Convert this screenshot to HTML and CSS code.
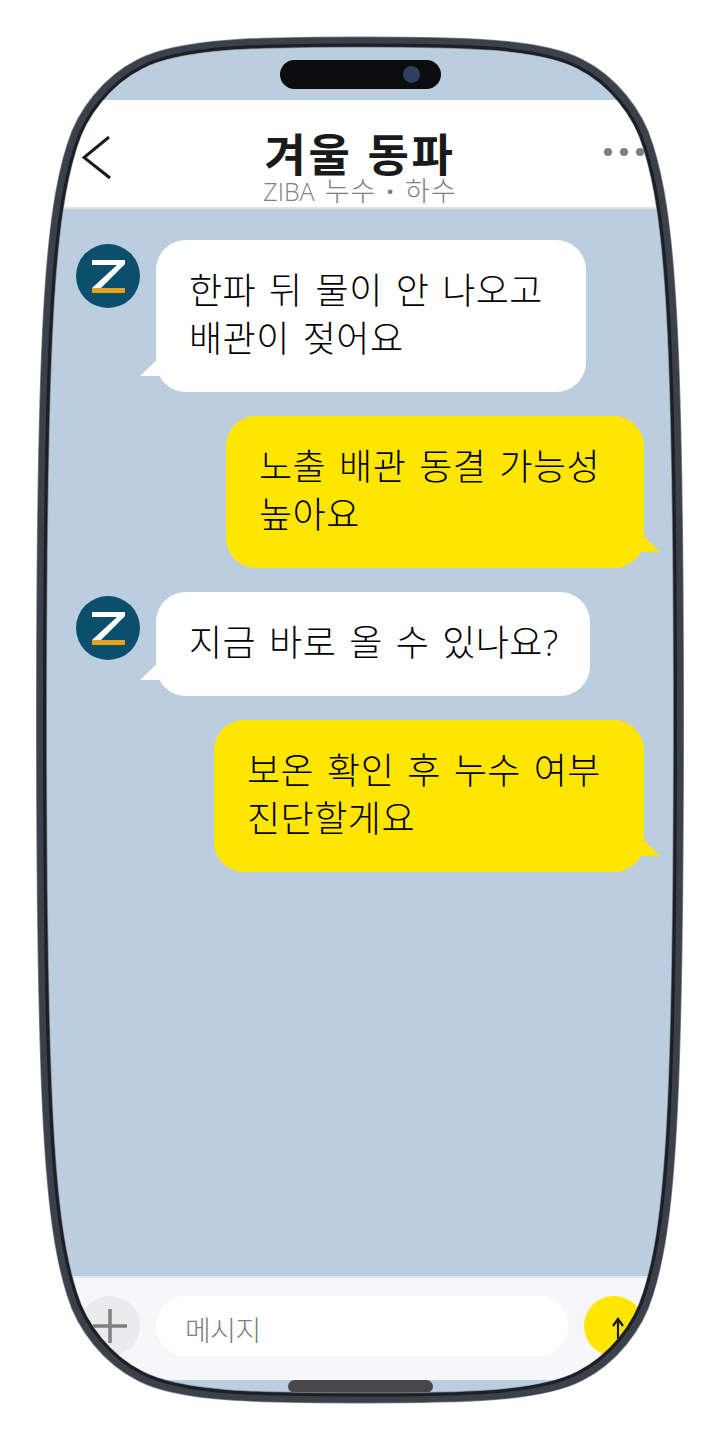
FILE: index.html

```html
<!DOCTYPE html>
<html lang="ko">
<head>
  <meta charset="UTF-8" />
  <title>겨울 동파</title>
  <link rel="stylesheet" href="styles.css">
</head>
<body>
  <div class="phone">
    <div class="screen">
      <div class="status">
        <div class="island"><span class="camera"></span></div>
      </div>

      <header class="header">
        <svg class="back" viewBox="0 0 30 44" width="30" height="44">
          <path d="M27 1 L2 21.500 L28 42" fill="none" stroke="#1a1a1a" stroke-width="3" />
        </svg>
        <div class="title-block">
          <h1 class="title">겨울 동파</h1>
          <p class="subtitle"><span class="latin">ZIBA</span> 누수 <b class="sep">·</b> 하수</p>
        </div>
        <div class="dots"><span></span><span></span><span></span></div>
      </header>

      <main class="chat">
        <div class="row row-in">
          <svg class="avatar" viewBox="0 0 64 64" width="64" height="64">
            <circle cx="32" cy="32" r="32" fill="#0b4f6c" />
            <path d="M16 16 H49 V20 L25 44 H16 L41 21 H16 Z" fill="#fff" />
            <rect x="16" y="44" width="33" height="5" fill="#e5a117" />
          </svg>
          <div class="bubble bubble-in bubble-wide">한파 뒤 물이 안 나오고<br>배관이 젖어요</div>
        </div>
        <div class="row row-out">
          <div class="bubble bubble-out bubble-narrow">노출 배관 동결 가능성<br>높아요</div>
        </div>
        <div class="row row-in">
          <svg class="avatar" viewBox="0 0 64 64" width="64" height="64">
            <circle cx="32" cy="32" r="32" fill="#0b4f6c" />
            <path d="M16 16 H49 V20 L25 44 H16 L41 21 H16 Z" fill="#fff" />
            <rect x="16" y="44" width="33" height="5" fill="#e5a117" />
          </svg>
          <div class="bubble bubble-in bubble-short">지금 바로 올 수 있나요?</div>
        </div>
        <div class="row row-out">
          <div class="bubble bubble-out bubble-wide">보온 확인 후 누수 여부<br>진단할게요</div>
        </div>
      </main>

      <div class="composer">
        <div class="plus">
          <svg viewBox="0 0 36 36" width="36" height="36">
            <path d="M18 1 V35 M1 18 H35" fill="none" stroke="#808080" stroke-width="3.500" />
          </svg>
        </div>
        <div class="input">메시지</div>
        <div class="send">
          <svg viewBox="0 0 16 40" width="16" height="40">
            <path d="M8 4 V24 M3 11 L8 4 L13 11" fill="none" stroke="#1a1a1a" stroke-width="2.200" />
          </svg>
        </div>
      </div>

      <div class="home-area"><div class="home-bar"></div></div>
    </div>

    <svg class="frame" viewBox="0 0 720 1440" width="720" height="1440">
      <path class="frame-edge" d="M360 42 C260 42 180 43 140 64 C108 80 82 112 72 146 C50 215 41.500 330 41.500 720 C41.500 1110 50 1225 72 1294 C82 1328 108 1360 140 1376 C180 1397 260 1398 360 1398 C460 1398 540 1397 580 1376 C612 1360 638 1328 648 1294 C670 1225 678.500 1110 678.500 720 C678.500 330 670 215 648 146 C638 112 612 80 580 64 C540 43 460 42 360 42 Z" />
      <path class="frame-body" d="M360 42 C260 42 180 43 140 64 C108 80 82 112 72 146 C50 215 41.500 330 41.500 720 C41.500 1110 50 1225 72 1294 C82 1328 108 1360 140 1376 C180 1397 260 1398 360 1398 C460 1398 540 1397 580 1376 C612 1360 638 1328 648 1294 C670 1225 678.500 1110 678.500 720 C678.500 330 670 215 648 146 C638 112 612 80 580 64 C540 43 460 42 360 42 Z" />
      <path class="frame-inner" d="M360 42 C260 42 180 43 140 64 C108 80 82 112 72 146 C50 215 41.500 330 41.500 720 C41.500 1110 50 1225 72 1294 C82 1328 108 1360 140 1376 C180 1397 260 1398 360 1398 C460 1398 540 1397 580 1376 C612 1360 638 1328 648 1294 C670 1225 678.500 1110 678.500 720 C678.500 330 670 215 648 146 C638 112 612 80 580 64 C540 43 460 42 360 42 Z" />
    </svg>
  </div>
</body>
</html>
```

FILE: styles.css

```css
body {
  margin: 0;
  background: white;
  font-family: "Open Sans", "Noto Sans CJK KR", sans-serif;
}
.phone {
  position: relative;
  width: 720px;
  height: 1440px;
  overflow: hidden;
}
.screen {
  display: flex;
  flex-direction: column;
  height: 1440px;
  background: #bacee0;
  clip-path: path("M360 42 C260 42 180 43 140 64 C108 80 82 112 72 146 C50 215 41.5 330 41.5 720 C41.5 1110 50 1225 72 1294 C82 1328 108 1360 140 1376 C180 1397 260 1398 360 1398 C460 1398 540 1397 580 1376 C612 1360 638 1328 648 1294 C670 1225 678.5 1110 678.5 720 C678.5 330 670 215 648 146 C638 112 612 80 580 64 C540 43 460 42 360 42 Z");
}

/* top of the phone */
.status {
  height: 100px;
  box-sizing: border-box;
  padding-top: 60px;
  display: flex;
  justify-content: center;
}
.island {
  width: 161px;
  height: 29px;
  border-radius: 15px;
  background: #0c0c0f;
  display: flex;
  align-items: center;
  justify-content: flex-end;
  padding-right: 21px;
  box-sizing: border-box;
}
.camera {
  width: 17px;
  height: 17px;
  border-radius: 50%;
  background: #2c4060;
}

/* header */
.header {
  height: 109px;
  box-sizing: border-box;
  background: white;
  border-bottom: 2px solid #e3e3e3;
  display: grid;
  grid-template-columns: 1fr auto 1fr;
  align-items: start;
}
.back {
  margin: 36px 0 0 82px;
}
.title-block {
  text-align: center;
  padding-top: 32px;
}
.title {
  margin: 0;
  font-size: 45px;
  line-height: 46px;
  font-weight: 700;
  letter-spacing: 2.5px;
  word-spacing: 1px;
  color: #1a1a1a;
}
.subtitle {
  margin: 0;
  font-size: 27px;
  line-height: 26px;
  font-weight: 300;
  letter-spacing: 1px;
  word-spacing: 2px;
  color: #808080;
}
.latin {
  font-size: 25px;
  letter-spacing: 0;
}
.sep {
  font-weight: 700;
}
.dots {
  justify-self: end;
  display: flex;
  gap: 8px;
  margin: 48px 76px 0 0;
}
.dots span {
  width: 8px;
  height: 8px;
  border-radius: 50%;
  background: #808080;
}

/* messages */
.chat {
  flex: 1;
  display: flex;
  flex-direction: column;
  gap: 24px;
  padding: 31px 76px 0;
}
.row {
  display: flex;
  align-items: flex-start;
}
.row-in {
  gap: 16px;
}
.row-out {
  justify-content: flex-end;
}
.avatar {
  flex: none;
  margin-top: 4px;
}
.bubble {
  position: relative;
  padding: 27px 33px 29px;
  box-sizing: border-box;
  border-radius: 30px;
  font-size: 36px;
  line-height: 48px;
  font-weight: 300;
  color: #000;
  letter-spacing: 0.5px;
  word-spacing: 3px;
}
.bubble-wide {
  width: 430px;
}
.bubble-narrow {
  width: 418px;
}
.bubble-short {
  width: 434px;
  padding-right: 0;
}
.bubble::after {
  content: "";
  position: absolute;
  bottom: 16px;
  width: 24px;
  height: 16px;
}
.bubble-in {
  background: white;
}
.bubble-in::after {
  left: -16px;
  background: white;
  clip-path: polygon(0 100%, 70% 0, 100% 100%);
}
.bubble-out {
  background: #ffe600;
}
.bubble-out::after {
  right: -16px;
  background: #ffe600;
  clip-path: polygon(100% 100%, 33% 0, 0 100%);
}

/* message bar */
.composer {
  height: 104px;
  box-sizing: border-box;
  background: #f7f7f9;
  border-top: 2px solid #e5e6ea;
  padding: 18px 76px 0 80px;
  display: flex;
  gap: 16px;
  align-items: flex-start;
}
.plus {
  width: 60px;
  height: 60px;
  flex: none;
  border-radius: 50%;
  background: #ebebed;
  display: flex;
  align-items: center;
  justify-content: center;
}
.input {
  flex: 1;
  height: 60px;
  box-sizing: border-box;
  border-radius: 30px;
  background: white;
  padding-left: 29px;
  font-size: 28px;
  line-height: 68px;
  font-weight: 300;
  letter-spacing: -0.5px;
  color: #808080;
}
.send {
  width: 60px;
  height: 60px;
  flex: none;
  border-radius: 50%;
  background: #ffe600;
  display: flex;
  justify-content: flex-end;
}
.send svg {
  margin: 19px 18px 0 0;
}
.home-area {
  flex: none;
  height: 60px;
  display: flex;
  justify-content: center;
}
.home-bar {
  width: 145px;
  height: 13px;
  border-radius: 7px;
  background: #47484c;
}

/* phone outline, drawn over the screen */
.frame {
  position: absolute;
  top: 0;
  left: 0;
  fill: none;
}
.frame-edge {
  stroke: #80848b;
  stroke-width: 11;
}
.frame-body {
  stroke: #3b414b;
  stroke-width: 9.5;
}
.frame-inner {
  stroke: #1c1f24;
  stroke-width: 3;
  transform-origin: 360px 720px;
  transform: scale(0.9906, 0.9956);
}
```
